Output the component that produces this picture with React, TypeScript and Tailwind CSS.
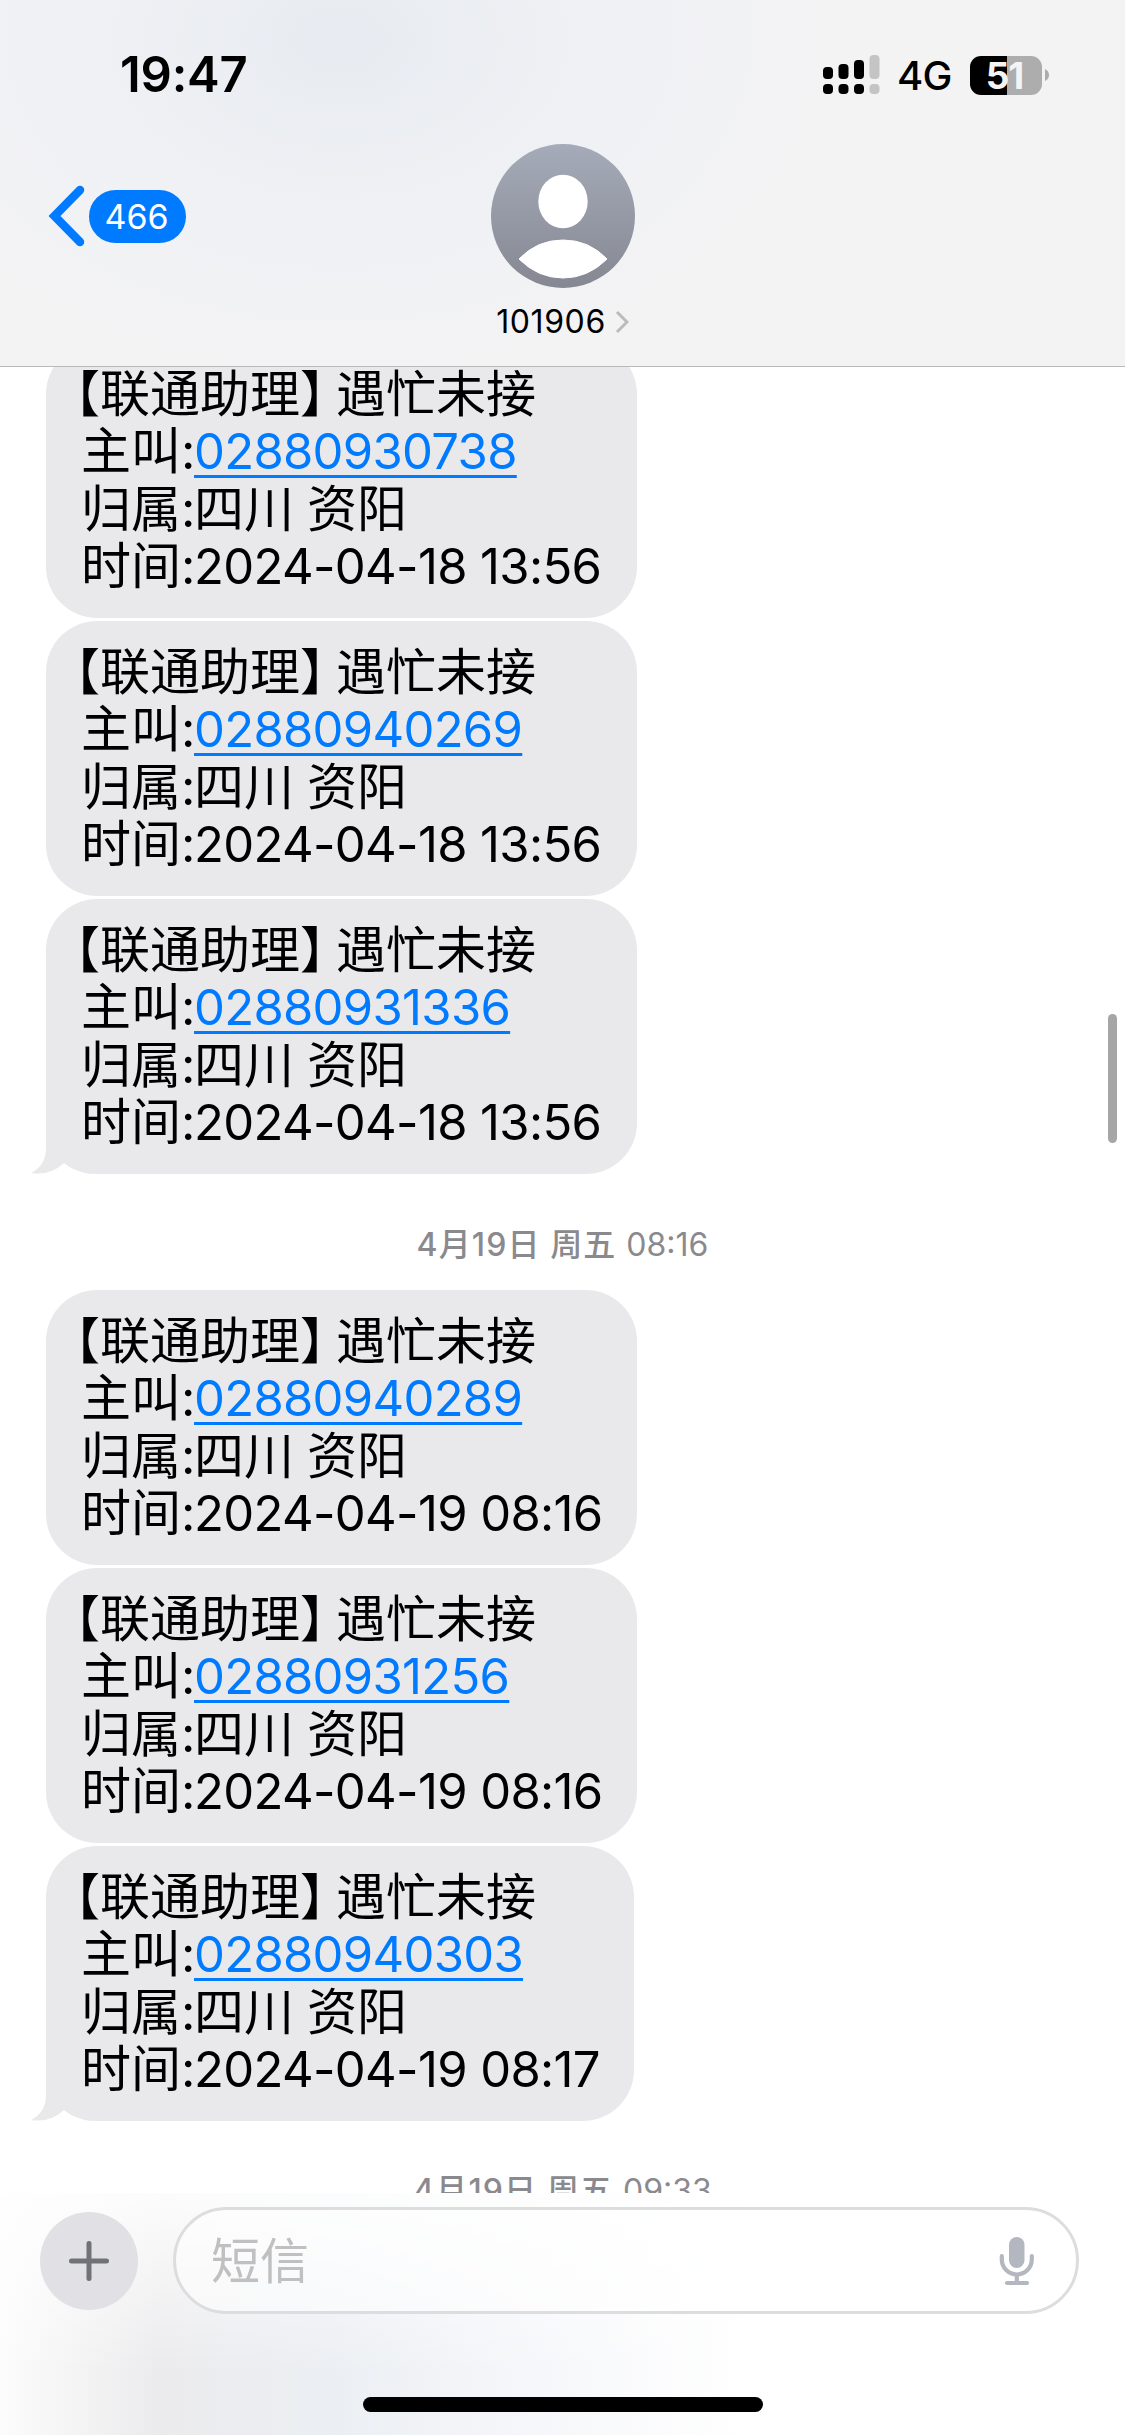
import React from "react";

const latin = "font-['Inter','Noto_Sans_CJK_SC',sans-serif]";

type Message = { caller: string; time: string; tail?: boolean; width: string };

const firstGroup: Message[] = [
  { caller: "02880930738", time: "2024-04-18 13:56", width: "w-[591px]" },
  { caller: "02880940269", time: "2024-04-18 13:56", width: "w-[591px]" },
  { caller: "02880931336", time: "2024-04-18 13:56", width: "w-[591px]", tail: true },
];

const secondGroup: Message[] = [
  { caller: "02880940289", time: "2024-04-19 08:16", width: "w-[591px]" },
  { caller: "02880931256", time: "2024-04-19 08:16", width: "w-[591px]" },
  { caller: "02880940303", time: "2024-04-19 08:17", width: "w-[588px]", tail: true },
];

function Label({ children }: { children: string }) {
  return <span className="inline-block w-[113px] shrink-0 whitespace-nowrap">{children}:</span>;
}

function Bubble({ caller, time, tail, width }: Message) {
  return (
    <div
      className={`relative flex h-[275px] shrink-0 flex-col rounded-[51px] bg-[#e9e9eb] pt-[23px] pl-[35px] text-[50px] whitespace-nowrap text-black ${width}`}
    >
      {tail && (
        <svg className="absolute bottom-0 left-[-16px]" width="66" height="60" viewBox="0 0 66 60" fill="#e9e9eb">
          <path d="M16 0 V34 C16 46 10 55 1 59 Q20 62 34 49 Q44 58 62 60 L62 0 Z" />
        </svg>
      )}
      <div className="relative flex h-[57px] leading-[57px]">
        <span className="-ml-[6px] mr-[6px] w-[19px] [font-feature-settings:'halt']">【</span>
        <span>联通助理</span>
        <span className="w-[36px] [font-feature-settings:'halt']">】</span>
        <span>遇忙未接</span>
      </div>
      <div className="relative flex h-[58px] leading-[57px]">
        <Label>主叫</Label>
        <span className="text-[49px] tracking-[-0.7px] text-[#007aff] underline decoration-[3px] underline-offset-[6px]">{caller}</span>
      </div>
      <div className="relative flex h-[57px] leading-[57px]">
        <Label>归属</Label>
        <span>四川</span>
        <span className="ml-[13px]">资阳</span>
      </div>
      <div className="relative flex h-[58px] leading-[57px]">
        <Label>时间</Label>
        <span className="text-[49px] tracking-[-0.65px]">{time}</span>
      </div>
    </div>
  );
}

function DateStamp({ day, time }: { day: string; time: string }) {
  return (
    <div className="flex justify-center gap-[10px] text-[32px] leading-[40px] whitespace-nowrap text-[#8a8a8e]">
      <span className="font-medium tracking-[1.1px]">{day}</span>
      <span>{time}</span>
    </div>
  );
}

function StatusBar() {
  return (
    <div className="flex h-[144px] items-start justify-between pr-[76px] pl-[120px]">
      <div className="mt-[45px] text-[49px] leading-[60px] font-semibold tracking-[-0.2px] text-black">19:47</div>
      <div className="mt-[55px] flex h-[40px] items-center">
        <svg width="57" height="40" viewBox="0 0 57 40">
          <g fill="#000">
            <rect x="0" y="12" width="10" height="12" rx="4" />
            <rect x="15.5" y="9" width="10" height="15" rx="4" />
            <rect x="31" y="5" width="10" height="19" rx="4" />
            <rect x="0" y="29" width="10" height="10" rx="4" />
            <rect x="15.5" y="29" width="10" height="10" rx="4" />
            <rect x="31" y="29" width="10" height="10" rx="4" />
          </g>
          <g fill="#c4c4c4">
            <rect x="46.5" y="0" width="10" height="24" rx="4" />
            <rect x="46.5" y="29" width="10" height="10" rx="4" />
          </g>
        </svg>
        <div className="mt-[2px] ml-[17px] w-[73px] text-[40px] leading-[40px] font-medium tracking-[-0.8px] text-black">4G</div>
        <div className="flex h-[39px] w-[72px] items-center justify-center rounded-[11px] bg-[linear-gradient(90deg,#000_37px,#adadad_37px)] pr-[3px] text-[37px] leading-[39px] font-bold tracking-[-1px] text-[#f4f4f4]">
          51
        </div>
        <svg className="ml-[3px]" width="4" height="12" viewBox="0 0 4 12">
          <path d="M0 0 Q4 2 4 6 T0 12 Z" fill="#adadad" />
        </svg>
      </div>
    </div>
  );
}

function Header() {
  return (
    <header className="relative z-10 flex h-[367px] shrink-0 flex-col border-b border-[#b9b9bb] bg-[#f3f3f4] bg-[radial-gradient(ellipse_480px_330px_at_340px_40px,#e7ebf1_0%,rgba(238,240,244,0.7)_55%,rgba(243,243,244,0)_100%)]">
      <StatusBar />
      <div className="grid grid-cols-[1fr_144px_1fr]">
        <div className="flex h-[144px] items-center pl-[48px]">
          <svg width="38" height="62" viewBox="0 0 38 62">
            <path d="M32 5 L6.500 31 L32 57" fill="none" stroke="#007aff" strokeWidth="8.5" strokeLinecap="round" strokeLinejoin="miter" />
          </svg>
          <div className="ml-[3px] flex h-[53px] w-[97px] items-center justify-center rounded-full bg-[#007aff] pr-[2px] text-[34px] text-white">
            466
          </div>
        </div>
        <div className="flex flex-col items-center">
          <svg width="144" height="144" viewBox="0 0 144 144">
            <defs>
              <linearGradient id="avatar" x1="0" y1="0" x2="0" y2="1">
                <stop offset="0" stopColor="#a6abb9" />
                <stop offset="1" stopColor="#858892" />
              </linearGradient>
            </defs>
            <circle cx="72" cy="72" r="72" fill="url(#avatar)" />
            <ellipse cx="72" cy="57.5" rx="24.7" ry="26.8" fill="#fff" />
            <path d="M28 115 Q46 96 72 96 T116 115 Q97 134 72 134 T28 115 Z" fill="#fff" stroke="#fff" strokeWidth="1" strokeLinejoin="round" />
          </svg>
          <div className="mt-[14px] flex items-center text-[32px] leading-[40px] tracking-[0.6px] whitespace-nowrap text-black">
            <span>101906</span>
            <svg className="ml-[9px]" width="14" height="24" viewBox="0 0 14 24">
              <path d="M2 2 L12 12 L2 22" fill="none" stroke="#bbbbbd" strokeWidth="3" />
            </svg>
          </div>
        </div>
        <div />
      </div>
    </header>
  );
}

function Composer() {
  return (
    <footer className="relative z-10 flex h-[242px] shrink-0 flex-col items-center bg-white bg-[linear-gradient(180deg,rgba(255,255,255,.85)_0%,rgba(255,255,255,0)_75%),linear-gradient(90deg,#fcfcfc_0px,#ebebed_160px,#ebeff3_330px,#f5f6f9_510px,#ffffff_750px)] pt-[14px]">
      <div className="flex w-full items-center pl-[40px]">
        <div className="flex size-[98px] items-center justify-center rounded-full bg-[#e1e1e5]">
          <svg width="40" height="40" viewBox="0 0 40 40">
            <path d="M20 2.500 V37.500 M2.500 20 H37.500" stroke="#6f7279" strokeWidth="5" strokeLinecap="round" />
          </svg>
        </div>
        <div className="ml-[35px] flex h-[107px] w-[906px] items-center justify-between rounded-full border-[3px] border-[#dddddf] bg-white/50 pr-[41px] pl-[35px]">
          <span className="mt-[3px] text-[49px] leading-[60px] text-[#c0c0c2]">短信</span>
          <svg width="36" height="50" viewBox="0 0 36 50">
            <rect x="10" y="1" width="15.500" height="31" rx="7.750" fill="#b2b7c0" />
            <path d="M2.800 20 V23.500 A15 15 0 0 0 32.800 23.500 V20 M17.800 39 V47 M8 47 H28" fill="none" stroke="#b2b7c0" strokeWidth="4.200" strokeLinecap="round" />
          </svg>
        </div>
      </div>
      <div className="mt-[83px] h-[15px] w-[400px] rounded-full bg-black" />
    </footer>
  );
}

export default function App() {
  return (
    <div className={`relative flex h-[2435px] w-[1125px] flex-col overflow-hidden bg-white ${latin}`}>
      <Header />
      <main className="relative -mt-[24px] flex h-[1850px] shrink-0 flex-col overflow-hidden pl-[46px]">
        <div className="flex flex-col gap-[3px]">
          {firstGroup.map((m) => (
            <Bubble key={m.caller} {...m} />
          ))}
        </div>
        <div className="mt-[51px] mb-[25px] -ml-[46px]">
          <DateStamp day="4月19日 周五" time="08:16" />
        </div>
        <div className="flex flex-col gap-[3px]">
          {secondGroup.map((m) => (
            <Bubble key={m.caller} {...m} />
          ))}
        </div>
        <div className="mt-[50px] -ml-[46px]">
          <DateStamp day="4月19日 周五" time="09:33" />
        </div>
        <div className="absolute top-[671px] right-[8px] h-[129px] w-[9px] rounded-full bg-[#a6a6a6]" />
      </main>
      <Composer />
    </div>
  );
}
